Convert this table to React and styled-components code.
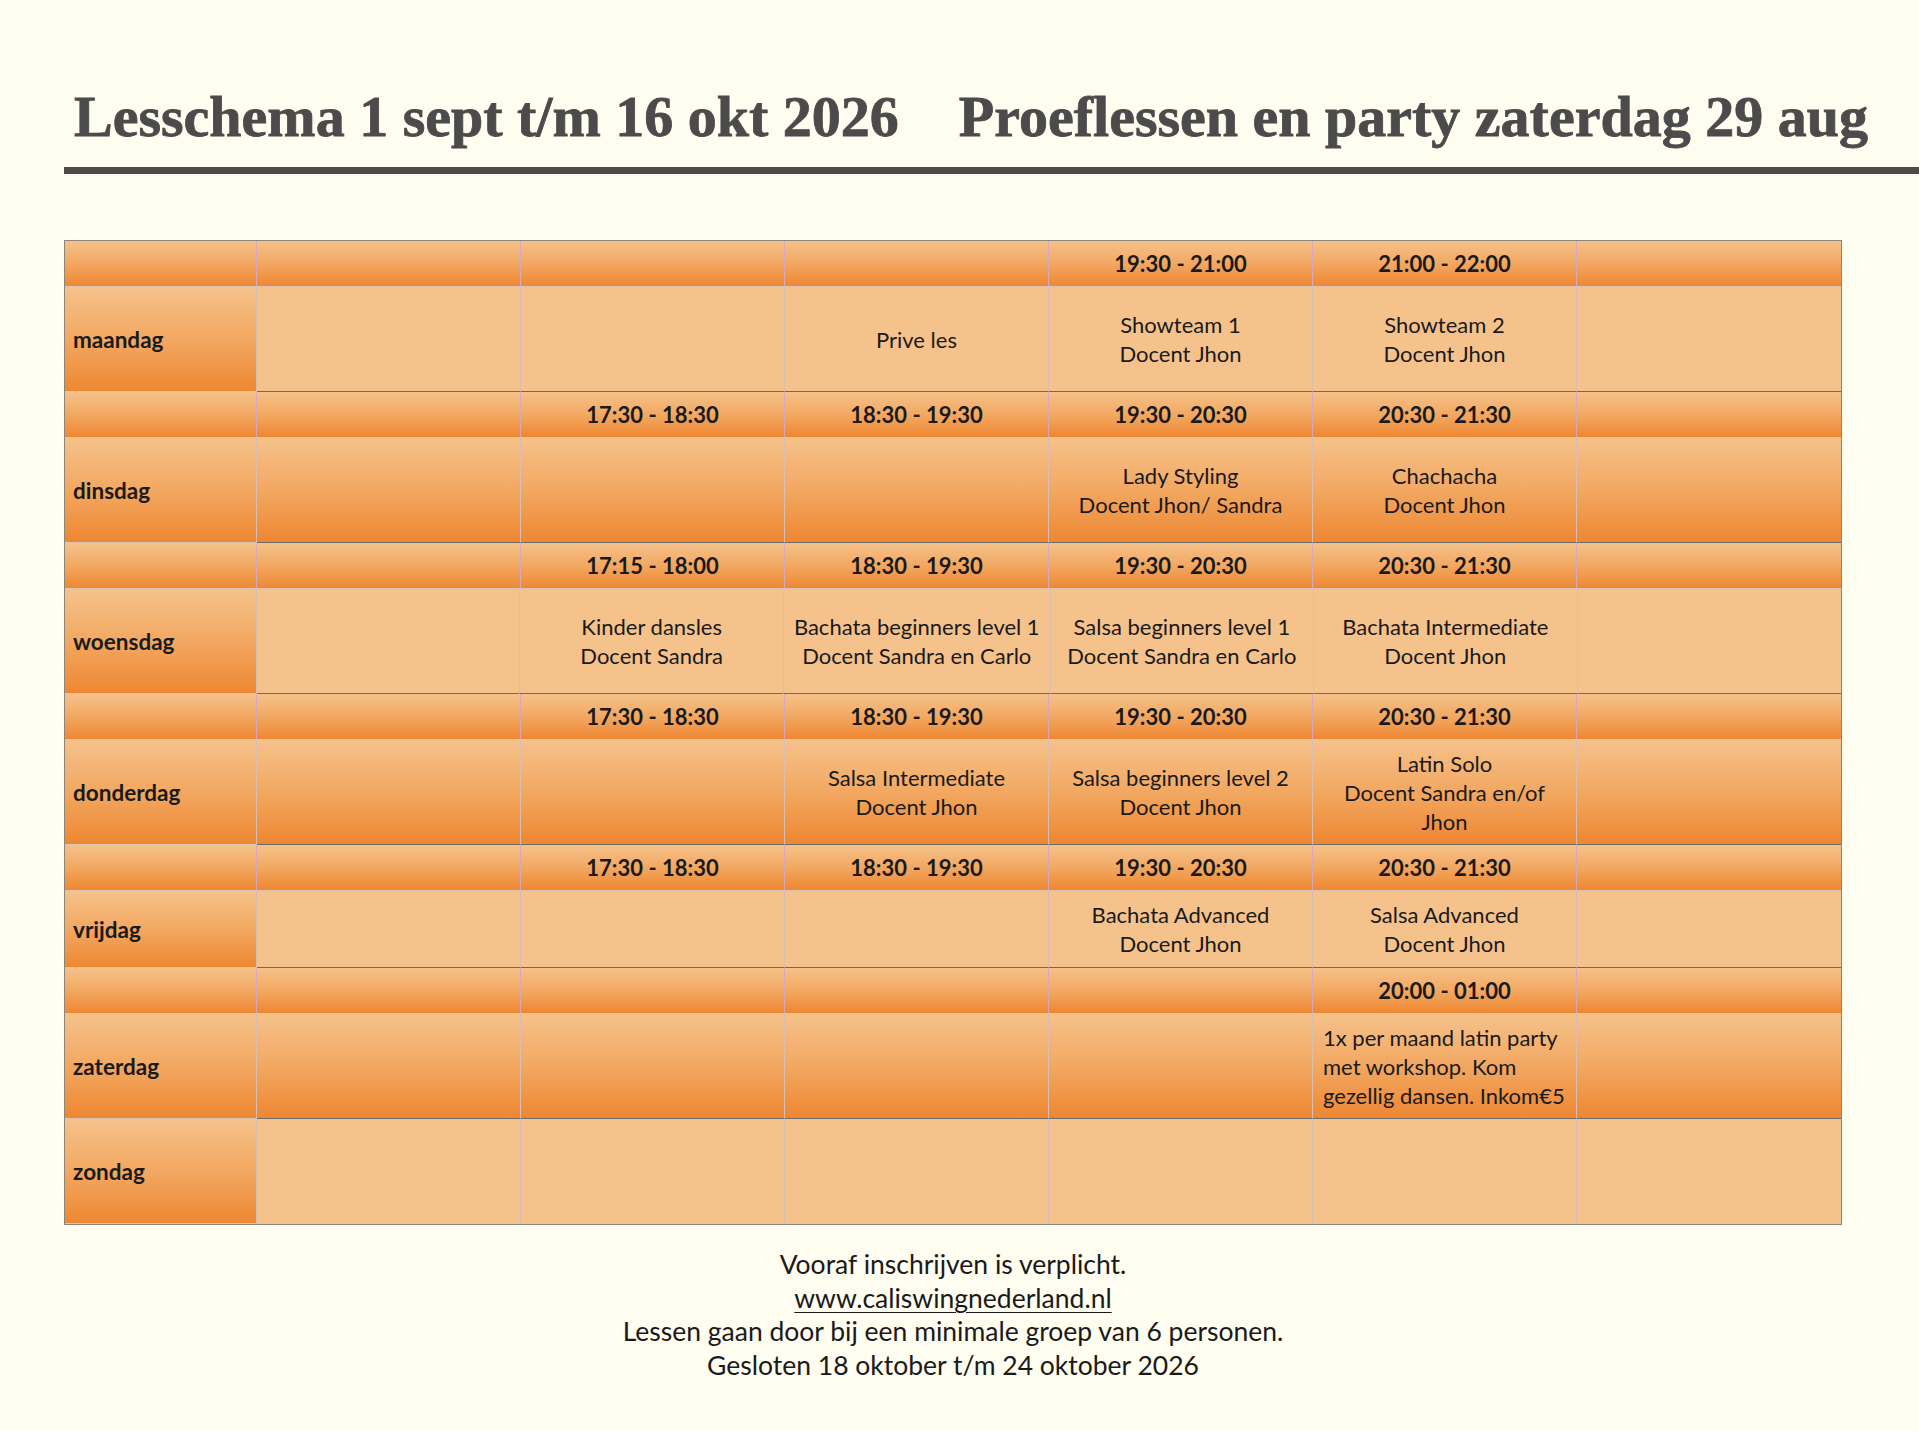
import React from 'react';
import styled, { createGlobalStyle, css } from 'styled-components';

const GlobalStyle = createGlobalStyle`
  html, body {
    margin: 0;
    padding: 0;
    background: #fffcf0;
  }
  body {
    font-family: Lato, "Noto Sans", sans-serif;
    color: #1a1a1a;
  }
`;

const LIGHT = '#f5c28b';
const DARK = '#ee8733';

const shaded = css`
  background: linear-gradient(to bottom, ${LIGHT} 0%, #f2a861 50%, ${DARK} 100%);
`;

const Page = styled.div`
  width: 1919px;
  min-height: 1431px;
  padding: 79px 0 0 64px;
  box-sizing: border-box;
  overflow: hidden;
`;

const Header = styled.header`
  display: flex;
  gap: 60px;
  padding: 0 0 12px 10px;
  border-bottom: 7px solid #4b4b4b;
  margin-right: -40px;
`;

const Title = styled.h1`
  margin: 0;
  font-family: "Liberation Serif", "DejaVu Serif", serif;
  font-weight: 700;
  font-size: 58px;
  line-height: 76px;
  letter-spacing: 0;
  -webkit-text-stroke: 0.8px #4b4b4b;
  color: #4b4b4b;
  white-space: nowrap;
`;

const Table = styled.div`
  width: 1778px;
  margin-top: 66px;
  border: 1.5px solid #8c8578;
  box-sizing: border-box;
  display: flex;
  flex-direction: column;
`;

const Row = styled.div`
  display: grid;
  grid-template-columns: 192px repeat(6, 1fr);
  height: ${(p) => p.$h}px;
`;

const Cell = styled.div`
  box-sizing: border-box;
  display: flex;
  align-items: center;
  justify-content: center;
  text-align: center;
  border-right: 1px solid #d8bfb2;
  border-bottom: 1px solid ${(p) => (p.$dark ? '#6e6a66' : '#ddc4ae')};
  background: ${LIGHT};
  ${(p) => p.$shade && shaded}
  &:last-child {
    border-right: none;
  }
`;

const SlotCell = styled(Cell)`
  font-weight: 700;
  font-size: 22px;
  border-right-color: #d6a8bf;
  ${shaded}
`;

const DayCell = styled(Cell)`
  justify-content: flex-start;
  padding-left: 8px;
  font-weight: 700;
  font-size: 22.5px;
  ${shaded}
  border-bottom-color: #ddc4ae;
`;

const LessonCell = styled(Cell)`
  flex-direction: column;
  justify-content: center;
  align-items: ${(p) => (p.$left ? 'flex-start' : 'center')};
  text-align: ${(p) => (p.$left ? 'left' : 'center')};
  padding: 0 10px;
  font-size: 22px;
  line-height: 29px;
  white-space: nowrap;
`;

const Footer = styled.footer`
  width: 1778px;
  margin-top: 23px;
  text-align: center;
  font-size: 26.5px;
  line-height: 33.5px;
  color: #1a1a1a;
`;

const Link = styled.span`
  text-decoration: underline;
  text-decoration-thickness: 1px;
  text-underline-offset: 4px;
`;

const schedule = [
  {
    day: 'maandag',
    slots: ['', '', '', '19:30 - 21:00', '21:00 - 22:00', ''],
    lessons: [[], [], ['Prive les'], ['Showteam 1', 'Docent Jhon'], ['Showteam 2', 'Docent Jhon'], []],
    shade: false,
  },
  {
    day: 'dinsdag',
    slots: ['', '17:30 - 18:30', '18:30 - 19:30', '19:30 - 20:30', '20:30 - 21:30', ''],
    lessons: [[], [], [], ['Lady Styling', 'Docent Jhon/ Sandra'], ['Chachacha', 'Docent Jhon'], []],
    shade: true,
  },
  {
    day: 'woensdag',
    slots: ['', '17:15 - 18:00', '18:30 - 19:30', '19:30 - 20:30', '20:30 - 21:30', ''],
    lessons: [
      [],
      ['Kinder dansles', 'Docent Sandra'],
      ['Bachata beginners level 1', 'Docent Sandra en Carlo'],
      ['Salsa beginners level 1', 'Docent Sandra en Carlo'],
      ['Bachata Intermediate', 'Docent Jhon'],
      [],
    ],
    shade: false,
  },
  {
    day: 'donderdag',
    slots: ['', '17:30 - 18:30', '18:30 - 19:30', '19:30 - 20:30', '20:30 - 21:30', ''],
    lessons: [
      [],
      [],
      ['Salsa Intermediate', 'Docent Jhon'],
      ['Salsa beginners level 2', 'Docent Jhon'],
      ['Latin Solo', 'Docent Sandra en/of', 'Jhon'],
      [],
    ],
    shade: true,
  },
  {
    day: 'vrijdag',
    slots: ['', '17:30 - 18:30', '18:30 - 19:30', '19:30 - 20:30', '20:30 - 21:30', ''],
    lessons: [[], [], [], ['Bachata Advanced', 'Docent Jhon'], ['Salsa Advanced', 'Docent Jhon'], []],
    shade: false,
    height: 77,
  },
  {
    day: 'zaterdag',
    slots: ['', '', '', '', '20:00 - 01:00', ''],
    lessons: [[], [], [], [], ['1x per maand latin party', 'met workshop. Kom', 'gezellig dansen. Inkom€5'], []],
    shade: true,
    left: 4,
  },
  {
    day: 'zondag',
    slots: null,
    lessons: [[], [], [], [], [], []],
    shade: false,
    last: true,
  },
];

function DayBlock({ entry }) {
  return (
    <>
      {entry.slots && (
        <Row $h={46}>
          <SlotCell />
          {entry.slots.map((s, i) => (
            <SlotCell key={i}>{s}</SlotCell>
          ))}
        </Row>
      )}
      <Row $h={entry.height || 105}>
        <DayCell>{entry.day}</DayCell>
        {entry.lessons.map((lines, i) => (
          <LessonCell
            key={i}
            $shade={entry.shade}
            $dark={!entry.last}
            $left={entry.left === i}
            style={entry.last ? { borderBottom: 'none' } : undefined}
          >
            {lines.map((l) => (
              <div key={l}>{l}</div>
            ))}
          </LessonCell>
        ))}
      </Row>
    </>
  );
}

export default function App() {
  return (
    <>
      <GlobalStyle />
      <Page>
        <Header>
          <Title>Lesschema 1 sept t/m 16 okt 2026</Title>
          <Title>Proeflessen en party zaterdag 29 aug</Title>
        </Header>
        <Table>
          {schedule.map((entry) => (
            <DayBlock key={entry.day} entry={entry} />
          ))}
        </Table>
        <Footer>
          <div>Vooraf inschrijven is verplicht.</div>
          <div>
            <Link>www.caliswingnederland.nl</Link>
          </div>
          <div>Lessen gaan door bij een minimale groep van 6 personen.</div>
          <div>Gesloten 18 oktober t/m 24 oktober 2026</div>
        </Footer>
      </Page>
    </>
  );
}
